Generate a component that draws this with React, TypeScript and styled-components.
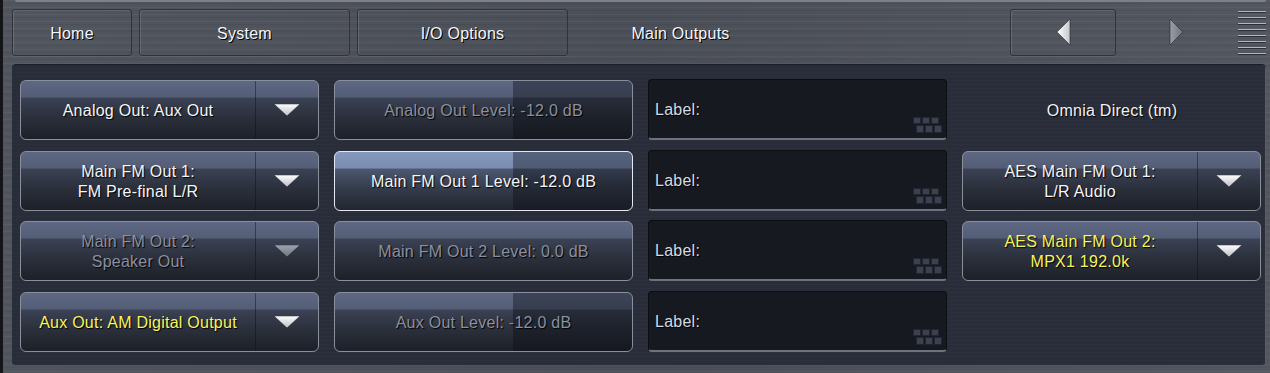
import React from 'react'
import styled, { createGlobalStyle, css } from 'styled-components'

const GlobalStyle = createGlobalStyle`
  html, body {
    margin: 0;
    padding: 0;
    background: #4d5159;
  }
  body {
    font-family: "Liberation Sans", Arial, sans-serif;
    letter-spacing: 0.25px;
  }
`

const brushed = css`
  background-color: #4e525b;
  background-image: repeating-linear-gradient(
      180deg,
      rgba(255, 255, 255, 0.04) 0px,
      rgba(255, 255, 255, 0.04) 1px,
      transparent 1px,
      transparent 3px,
      rgba(0, 0, 0, 0.06) 3px,
      rgba(0, 0, 0, 0.06) 4px,
      transparent 4px,
      transparent 7px
    ),
    linear-gradient(90deg, rgba(255, 255, 255, 0.02), rgba(0, 0, 0, 0.04), rgba(255, 255, 255, 0.03));
`

const Screen = styled.div`
  ${brushed};
  width: 1270px;
  height: 373px;
  box-sizing: border-box;
  border-left: 3px solid #141519;
  padding: 0 4px 8px 9px;
  display: flex;
  flex-direction: column;
  overflow: hidden;
`

const TopEdge = styled.div`
  height: 2px;
  margin: 0 0 7px 3px;
  background: #7c8088;
  border-radius: 0 0 3px 3px;
`

const TopBar = styled.div`
  display: flex;
  align-items: stretch;
  gap: 7px;
  height: 47px;
  margin-bottom: 8px;
`

const Tab = styled.div<{ $w: number; $current?: boolean }>`
  width: ${(p) => p.$w}px;
  box-sizing: border-box;
  display: flex;
  align-items: center;
  justify-content: center;
  padding-top: 2px;
  font-size: 16px;
  color: #f4f6fa;
  text-shadow: 1px 1px 0 #000;
  border-radius: 3px;
  ${(p) =>
    p.$current
      ? css`
          border: 1px solid transparent;
        `
      : css`
          border: 1px solid #30333a;
          box-shadow: inset 1px 1px 0 rgba(255, 255, 255, 0.13), 0 1px 0 rgba(255, 255, 255, 0.05);
        `}
`

const Spacer = styled.div`
  flex: 1;
`

const NavButton = styled(Tab)`
  width: 106px;
  padding-top: 0;
`

const MenuLines = styled.div`
  width: 28px;
  margin-left: 2px;
  display: flex;
  flex-direction: column;
  justify-content: center;
  gap: 4px;
`

const MenuLine = styled.div`
  height: 1px;
  background: #b4b7be;
  border-bottom: 1px solid #2c2f35;
`

const Panel = styled.div`
  flex: 1;
  background-color: #282d39;
  background-image: repeating-linear-gradient(
    180deg,
    rgba(255, 255, 255, 0.015) 0px,
    rgba(255, 255, 255, 0.015) 1px,
    transparent 1px,
    transparent 4px
  );
  border-radius: 4px 4px 3px 3px;
  box-shadow: inset 0 1px 0 #1b1e25, inset -1px 0 0 #5a5e68;
  padding: 16px 5px 13px 8px;
`

const Grid = styled.div`
  display: grid;
  grid-template-columns: repeat(4, 299px);
  grid-template-rows: repeat(4, 60px);
  column-gap: 15px;
  row-gap: 10.67px;
`

type Tone = 'normal' | 'dim' | 'yellow'

const toneColor = (t: Tone) => (t === 'dim' ? '#8990a2' : t === 'yellow' ? '#f6f55c' : '#f4f6fa')

const buttonFace = css`
  linear-gradient(180deg, #5e6883 0%, #545d76 28%, #3b4254 29%, #2b303c 62%, #1d2028 100%)
`

const Button = styled.div<{ $tone: Tone; $lit?: boolean; $level?: number }>`
  box-sizing: border-box;
  display: flex;
  align-items: stretch;
  border-radius: 6px;
  border: 1px solid ${(p) => (p.$lit ? '#e4e8f0' : '#8a909b')};
  color: ${(p) => toneColor(p.$tone)};
  text-shadow: 1px 1px 1px #000;
  font-size: 16px;
  line-height: 20px;
  overflow: hidden;
  background: ${(p) =>
    p.$level === undefined
      ? buttonFace
      : css`linear-gradient(90deg, transparent ${p.$level}%, rgba(8, 10, 16, 0.38) ${p.$level}%),
        ${p.$lit
          ? 'linear-gradient(180deg, #8798be 0%, #7b8cb1 28%, #4d5871 29%, #353c4c 62%, #22262f 100%)'
          : buttonFace}`};
`

const ButtonLabel = styled.div`
  flex: 1;
  display: flex;
  flex-direction: column;
  align-items: center;
  justify-content: center;
  text-align: center;
  padding-top: 2px;
`

const ArrowBox = styled.div`
  width: 62px;
  display: flex;
  align-items: center;
  justify-content: center;
  padding-top: 1px;
  border-left: 1px solid rgba(12, 14, 20, 0.45);
`

const LabelField = styled.div`
  box-sizing: border-box;
  display: flex;
  align-items: center;
  padding: 2px 4px 0 6px;
  background: #161920;
  border-radius: 4px;
  border: 1px solid #0c0e12;
  border-bottom: 2px solid #6e727c;
  color: #d6d9e0;
  font-size: 16px;
  text-shadow: 1px 1px 0 #000;
  margin-top: -1px;
`

const Grip = styled.svg`
  margin-left: auto;
  align-self: flex-end;
  margin-bottom: 5px;
`

const PlainText = styled.div`
  display: flex;
  align-items: center;
  justify-content: center;
  color: #f0f2f7;
  font-size: 16px;
  text-shadow: 1px 1px 1px #000;
  padding: 2px 0 0 1px;
`

const DownArrow = ({ dim }: { dim?: boolean }) => (
  <svg width="26" height="13" viewBox="0 0 26 13">
    <defs>
      <linearGradient id={dim ? 'dg' : 'wg'} x1="0" y1="0" x2="0" y2="1">
        <stop offset="0" stopColor={dim ? '#a0a5b0' : '#ffffff'} />
        <stop offset="1" stopColor={dim ? '#6c717c' : '#b9bdc5'} />
      </linearGradient>
    </defs>
    <polygon points="0,0 26,0 13,12" fill={`url(#${dim ? 'dg' : 'wg'})`} stroke="#1a1c22" strokeWidth="0.5" />
  </svg>
)

const SideArrow = ({ right, dim }: { right?: boolean; dim?: boolean }) => (
  <svg width="15" height="27" viewBox="0 0 15 27">
    <defs>
      <linearGradient id={right ? 'ra' : 'la'} x1="0" y1="0" x2="1" y2="0">
        <stop offset="0" stopColor={dim ? '#9a9ea6' : '#ffffff'} />
        <stop offset="1" stopColor={dim ? '#6f737b' : '#c4c7cd'} />
      </linearGradient>
    </defs>
    <polygon
      points={right ? '1,0 14,13 1,26' : '14,0 14,26 1,13'}
      fill={`url(#${right ? 'ra' : 'la'})`}
      stroke="#23252b"
      strokeWidth="0.6"
    />
  </svg>
)

const GripIcon = () => (
  <Grip width="29" height="16" viewBox="0 0 29 16">
    {[0, 9, 18].map((x) => (
      <rect key={'t' + x} x={x + 0.5} y={0.5} width={7} height={6} fill="#3c4152" stroke="#23262e" />
    ))}
    {[3, 12, 21].map((x) => (
      <rect key={'b' + x} x={x + 0.5} y={8.5} width={7} height={7} fill="#3c4152" stroke="#23262e" />
    ))}
  </Grip>
)

type Drop = { lines: string[]; tone?: Tone; lit?: boolean }

const Dropdown = ({ lines, tone = 'normal', lit }: Drop) => (
  <Button $tone={tone} $lit={lit}>
    <ButtonLabel>
      {lines.map((l) => (
        <span key={l}>{l}</span>
      ))}
    </ButtonLabel>
    <ArrowBox>
      <DownArrow dim={tone === 'dim'} />
    </ArrowBox>
  </Button>
)

const Level = ({ text, level, tone = 'normal', lit }: { text: string; level: number; tone?: Tone; lit?: boolean }) => (
  <Button $tone={tone} $lit={lit} $level={level}>
    <ButtonLabel>{text}</ButtonLabel>
  </Button>
)

const Label = () => (
  <LabelField>
    Label:
    <GripIcon />
  </LabelField>
)

const App = () => {
  return (
    <>
      <GlobalStyle />
      <Screen>
        <TopEdge />
        <TopBar>
          <Tab $w={120}>Home</Tab>
          <Tab $w={211}>System</Tab>
          <Tab $w={211}>I/O Options</Tab>
          <Tab $w={211} $current>
            Main Outputs
          </Tab>
          <Spacer />
          <NavButton $w={106}>
            <SideArrow />
          </NavButton>
          <NavButton $w={106} $current>
            <SideArrow right dim />
          </NavButton>
          <MenuLines>
            {Array.from({ length: 8 }).map((_, i) => (
              <MenuLine key={i} />
            ))}
          </MenuLines>
        </TopBar>
        <Panel>
          <Grid>
            <Dropdown lines={['Analog Out: Aux Out']} />
            <Level text="Analog Out Level: -12.0 dB" level={60} tone="dim" />
            <Label />
            <PlainText>Omnia Direct (tm)</PlainText>

            <Dropdown lines={['Main FM Out 1:', 'FM Pre-final L/R']} />
            <Level text="Main FM Out 1 Level: -12.0 dB" level={60} lit />
            <Label />
            <Dropdown lines={['AES Main FM Out 1:', 'L/R Audio']} />

            <Dropdown lines={['Main FM Out 2:', 'Speaker Out']} tone="dim" />
            <Level text="Main FM Out 2 Level: 0.0 dB" level={100} tone="dim" />
            <Label />
            <Dropdown lines={['AES Main FM Out 2:', 'MPX1 192.0k']} tone="yellow" />

            <Dropdown lines={['Aux Out: AM Digital Output']} tone="yellow" />
            <Level text="Aux Out Level: -12.0 dB" level={60} tone="dim" />
            <Label />
            <div />
          </Grid>
        </Panel>
      </Screen>
    </>
  )
}

export default App
